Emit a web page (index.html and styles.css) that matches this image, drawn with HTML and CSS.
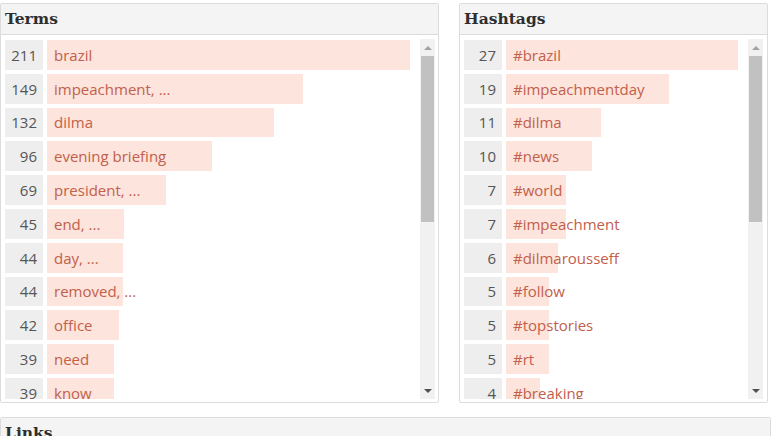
FILE: index.html
```html
<!DOCTYPE html>
<html>
<head>
<meta charset="utf-8">
<link rel="stylesheet" href="styles.css">
</head>
<body>
<div class="page">
  <div class="panels">
    <section class="panel panel-terms">
      <header class="panel-head">Terms</header>
      <div class="panel-body">
        <div class="list">
          <div class="row"><span class="count">211</span><span class="bar" style="width:363px">brazil</span></div>
          <div class="row"><span class="count">149</span><span class="bar" style="width:256px">impeachment, ...</span></div>
          <div class="row"><span class="count">132</span><span class="bar" style="width:227px">dilma</span></div>
          <div class="row"><span class="count">96</span><span class="bar" style="width:165px">evening briefing</span></div>
          <div class="row"><span class="count">69</span><span class="bar" style="width:119px">president, ...</span></div>
          <div class="row"><span class="count">45</span><span class="bar" style="width:77px">end, ...</span></div>
          <div class="row"><span class="count">44</span><span class="bar" style="width:76px">day, ...</span></div>
          <div class="row"><span class="count">44</span><span class="bar" style="width:76px">removed, ...</span></div>
          <div class="row"><span class="count">42</span><span class="bar" style="width:72px">office</span></div>
          <div class="row"><span class="count">39</span><span class="bar" style="width:67px">need</span></div>
          <div class="row"><span class="count">39</span><span class="bar" style="width:67px">know</span></div>
        </div>
        <div class="scrollbar">
          <div class="sb-btn sb-up"><span class="tri-up"></span></div>
          <div class="sb-track"><div class="sb-thumb"></div></div>
          <div class="sb-btn sb-down"><span class="tri-down"></span></div>
        </div>
      </div>
    </section>
    <section class="panel panel-tags">
      <header class="panel-head">Hashtags</header>
      <div class="panel-body">
        <div class="list">
          <div class="row"><span class="count">27</span><span class="bar" style="width:232px">#brazil</span></div>
          <div class="row"><span class="count">19</span><span class="bar" style="width:163px">#impeachmentday</span></div>
          <div class="row"><span class="count">11</span><span class="bar" style="width:95px">#dilma</span></div>
          <div class="row"><span class="count">10</span><span class="bar" style="width:86px">#news</span></div>
          <div class="row"><span class="count">7</span><span class="bar" style="width:60px">#world</span></div>
          <div class="row"><span class="count">7</span><span class="bar" style="width:60px">#impeachment</span></div>
          <div class="row"><span class="count">6</span><span class="bar" style="width:52px">#dilmarousseff</span></div>
          <div class="row"><span class="count">5</span><span class="bar" style="width:43px">#follow</span></div>
          <div class="row"><span class="count">5</span><span class="bar" style="width:43px">#topstories</span></div>
          <div class="row"><span class="count">5</span><span class="bar" style="width:43px">#rt</span></div>
          <div class="row"><span class="count">4</span><span class="bar" style="width:34px">#breaking</span></div>
        </div>
        <div class="scrollbar">
          <div class="sb-btn sb-up"><span class="tri-up"></span></div>
          <div class="sb-track"><div class="sb-thumb"></div></div>
          <div class="sb-btn sb-down"><span class="tri-down"></span></div>
        </div>
      </div>
    </section>
  </div>
  <section class="panel panel-links">
    <header class="panel-head">Links</header>
  </section>
</div>
</body>
</html>
```
FILE: styles.css
```css
html, body {
  margin: 0;
  padding: 0;
  background: #ffffff;
}
body {
  font-family: "Open Sans", Lato, sans-serif;
  font-size: 15px;
  overflow: hidden;
}
.page {
  padding-top: 3px;
  display: flex;
  flex-direction: column;
  gap: 14px;
}
.panels {
  display: flex;
  gap: 20px;
}
.panel {
  border: 1px solid #dcdcdc;
  border-radius: 2px;
  background: #fff;
  box-sizing: border-box;
}
.panel-terms { width: 439px; }
.panel-tags { width: 309px; }
.panel-links { width: 771px; height: 60px; }
.panel-head {
  height: 30px;
  line-height: 30px;
  background: #f4f4f4;
  border-bottom: 1px solid #dcdcdc;
  padding-left: 4px;
  font-family: "DejaVu Serif", serif;
  font-weight: bold;
  font-size: 15.5px;
  color: #2e2e2e;
}
.panel-body {
  display: flex;
  padding: 4px 4px 3px 4px;
}
.panel-terms .panel-body { padding-right: 3px; }
.list {
  flex: 1;
  height: 360px;
  overflow: hidden;
  padding-top: 1px;
  box-sizing: border-box;
}
.row {
  display: flex;
  align-items: stretch;
  height: 29.8px;
  margin-bottom: 4px;
  gap: 4px;
  white-space: nowrap;
}
.count {
  flex: none;
  width: 38px;
  box-sizing: border-box;
  background: #eeeeee;
  color: #555555;
  padding-right: 6px;
  display: flex;
  align-items: center;
  justify-content: flex-end;
}
.bar {
  flex: none;
  background: #fde4dc;
  color: #c2604a;
  padding-left: 7px;
  box-sizing: border-box;
  display: flex;
  align-items: center;
}
.scrollbar {
  flex: none;
  width: 15px;
  height: 360px;
  background: #f1f1f1;
  display: flex;
  flex-direction: column;
}
.sb-btn {
  height: 17px;
  display: flex;
  align-items: center;
  justify-content: center;
}
.sb-track {
  flex: 1;
  padding: 0 1px;
}
.sb-thumb {
  height: 166px;
  background: #c1c1c1;
}
.tri-up {
  width: 0;
  height: 0;
  border-left: 4px solid transparent;
  border-right: 4px solid transparent;
  border-bottom: 4px solid #a3a3a3;
}
.tri-down {
  width: 0;
  height: 0;
  border-left: 4px solid transparent;
  border-right: 4px solid transparent;
  border-top: 4px solid #505050;
}
```
